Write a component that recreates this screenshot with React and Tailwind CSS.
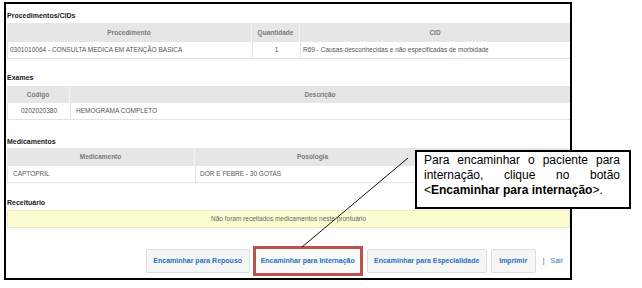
import React from "react";

const font = { fontFamily: '"Liberation Sans", Arial, sans-serif' };

function Label({ children, className }) {
  return (
    <div className={"h-[10px] leading-[10px] text-[7px] font-bold text-[#1a1a1a] " + className}>
      {children}
    </div>
  );
}

function HeadCell({ children, className }) {
  return (
    <div className={"h-full flex items-center justify-center border-r border-[#f3f3f3] " + className}>
      {children}
    </div>
  );
}

function Cell({ children, className }) {
  return (
    <div className={"h-full flex items-center border-r border-[#e3e3e3] " + className}>
      {children}
    </div>
  );
}

function Btn({ children, className }) {
  return (
    <div
      className={
        "h-[24px] flex items-center justify-center bg-[#f6f6f6] border border-[#dddddd] rounded-[2px] text-[7px] font-bold text-[#2a6fc1] " +
        className
      }
    >
      {children}
    </div>
  );
}

export default function App() {
  return (
    <div className="relative w-[642px] h-[288px] bg-white overflow-hidden" style={font}>
      <div className="ml-[4px] mt-[2px] w-[568px] h-[278px] border-2 border-black pl-[1px] flex flex-col">
        {/* Procedimentos */}
        <Label className="mt-[7px] mb-[2px]">Procedimentos/CIDs</Label>
        <div className="text-[6.5px]">
          <div className="flex h-[19px] bg-[#e6e6e6] font-bold text-[#7a7a7a]">
            <HeadCell className="w-[245px]">Procedimento</HeadCell>
            <HeadCell className="w-[48px]">Quantidade</HeadCell>
            <HeadCell className="flex-1 border-r-0">CID</HeadCell>
          </div>
          <div className="flex h-[17px] border-b border-l border-[#e3e3e3] text-[#555]">
            <Cell className="w-[245px] pl-[2px]">0301010064 - CONSULTA MEDICA EM ATENÇÃO BASICA</Cell>
            <Cell className="w-[48px] justify-center">1</Cell>
            <Cell className="flex-1 pl-[2px] border-r-0">R69 - Causas desconhecidas e não especificadas de morbidade</Cell>
          </div>
        </div>

        {/* Exames */}
        <Label className="mt-[14px] mb-[3px]">Exames</Label>
        <div className="text-[6.5px]">
          <div className="flex h-[17px] bg-[#e6e6e6] font-bold text-[#7a7a7a]">
            <HeadCell className="w-[63px]">Código</HeadCell>
            <HeadCell className="flex-1 border-r-0">Descrição</HeadCell>
          </div>
          <div className="flex h-[17px] border-b border-l border-[#e3e3e3] text-[#555]">
            <Cell className="w-[63px] justify-center">0202020380</Cell>
            <Cell className="flex-1 pl-[5px] border-r-0">HEMOGRAMA COMPLETO</Cell>
          </div>
        </div>

        {/* Medicamentos */}
        <Label className="mt-[17px] mb-[1px]">Medicamentos</Label>
        <div className="text-[6.5px]">
          <div className="flex h-[18px] bg-[#e6e6e6] font-bold text-[#7a7a7a]">
            <HeadCell className="w-[188px]">Medicamento</HeadCell>
            <HeadCell className="w-[236px]">Posologia</HeadCell>
            <HeadCell className="flex-1 border-r-0"></HeadCell>
          </div>
          <div className="flex h-[17px] border-b border-l border-[#e3e3e3] text-[#555]">
            <Cell className="w-[188px] pl-[5px]">CAPTOPRIL</Cell>
            <Cell className="w-[236px] pl-[4px]">DOR E FEBRE - 30 GOTAS</Cell>
            <Cell className="flex-1 border-r-0"></Cell>
          </div>
        </div>

        {/* Receituário */}
        <Label className="mt-[15px] mb-[2px]">Receituário</Label>
        <div className="h-[18px] flex items-center justify-center bg-[#fdfdd2] border border-[#ececc4] text-[6.5px] text-[#666]">
          Não foram receitados medicamentos neste prontuário
        </div>

        {/* Buttons */}
        <div className="mt-[18px] flex items-center justify-end pr-[7px]">
          <Btn className="w-[104px]">Encaminhar para Repouso</Btn>
          <div className="ml-[3px] w-[110px] h-[30px] border-[3px] border-[#c0504d] flex items-center">
            <div className="w-full h-[24px] flex items-center justify-center bg-[#fafafa] text-[7px] font-bold text-[#2a6fc1]">
              Encaminhar para Internação
            </div>
          </div>
          <Btn className="ml-[4px] w-[120px]">Encaminhar para Especialidade</Btn>
          <Btn className="ml-[4px] w-[45px]">Imprimir</Btn>
          <span className="ml-[7px] text-[7px] text-[#444]">|</span>
          <span className="ml-[6px] text-[7px] text-[#2a6fc1]">Sair</span>
        </div>
      </div>

      {/* connector line */}
      <svg className="absolute left-0 top-0 pointer-events-none" width="642" height="288">
        <line x1="302" y1="247" x2="408" y2="158" stroke="#111" strokeWidth="1" />
      </svg>

      {/* callout */}
      <div className="absolute left-[415px] top-[150px] w-[216px] h-[59px] border-2 border-black bg-white pl-[7px] pr-[9px] pt-[1px] text-[12px] leading-[15px] text-black text-justify">
        Para encaminhar o paciente para internação, clique no botão &lt;<b>Encaminhar para internação</b>&gt;.
      </div>
    </div>
  );
}
